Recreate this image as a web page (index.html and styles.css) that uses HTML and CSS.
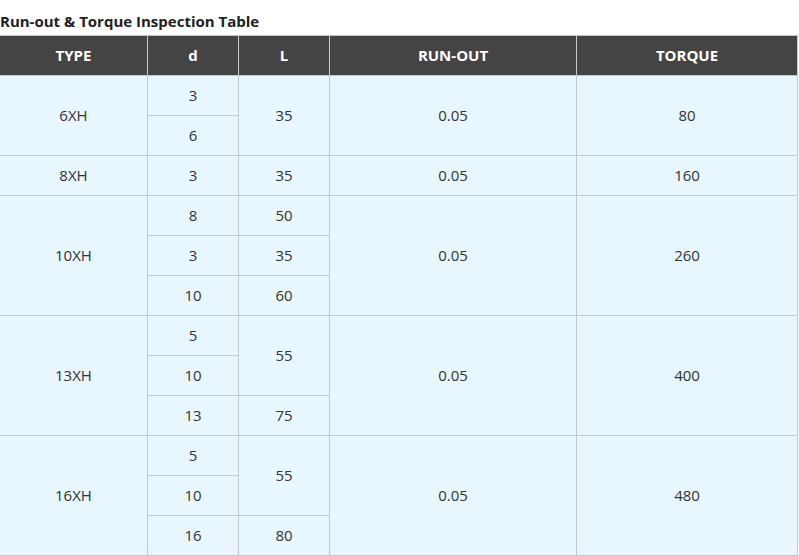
FILE: index.html
```html
<!DOCTYPE html>
<html>
<head>
<meta charset="utf-8">
<link rel="stylesheet" href="styles.css">
</head>
<body>
<div class="title">Run-out &amp; Torque Inspection Table</div>
<table class="spec">
<colgroup>
<col class="c1"><col class="c2"><col class="c3"><col class="c4"><col class="c5">
</colgroup>
<thead>
<tr><th>TYPE</th><th>d</th><th>L</th><th>RUN-OUT</th><th>TORQUE</th></tr>
</thead>
<tbody>
<tr><td rowspan="2">6XH</td><td>3</td><td rowspan="2">35</td><td rowspan="2">0.05</td><td rowspan="2">80</td></tr>
<tr><td>6</td></tr>
<tr><td>8XH</td><td>3</td><td>35</td><td>0.05</td><td>160</td></tr>
<tr><td rowspan="3">10XH</td><td>8</td><td>50</td><td rowspan="3">0.05</td><td rowspan="3">260</td></tr>
<tr><td>3</td><td>35</td></tr>
<tr><td>10</td><td>60</td></tr>
<tr><td rowspan="3">13XH</td><td>5</td><td rowspan="2">55</td><td rowspan="3">0.05</td><td rowspan="3">400</td></tr>
<tr><td>10</td></tr>
<tr><td>13</td><td>75</td></tr>
<tr><td rowspan="3">16XH</td><td>5</td><td rowspan="2">55</td><td rowspan="3">0.05</td><td rowspan="3">480</td></tr>
<tr><td>10</td></tr>
<tr><td>16</td><td>80</td></tr>
</tbody>
</table>
</body>
</html>
```
FILE: styles.css
```css
html, body {
  margin: 0;
  padding: 0;
  background: #ffffff;
  font-family: "Open Sans", "Noto Sans", sans-serif;
}
.title {
  height: 35px;
  box-sizing: border-box;
  padding-top: 11px;
  padding-left: 0;
  font-size: 15px;
  font-weight: 700;
  line-height: 20px;
  color: #222222;
}
.spec {
  border-collapse: collapse;
  table-layout: fixed;
  width: 799px;
  margin-left: -1px;
}
.c1 { width: 148px; }
.c2 { width: 91px; }
.c3 { width: 91px; }
.c4 { width: 247px; }
.c5 { width: 221px; }
.spec th, .spec td {
  border: 1px solid #c8c8c8;
  padding: 0 0 2px 0;
  height: 37px;
  text-align: center;
  vertical-align: middle;
  font-size: 15px;
}
.spec th {
  background: #444444;
  color: #ffffff;
  font-weight: 700;
}
.spec td {
  background: #e8f6fe;
  color: #333333;
}
```
